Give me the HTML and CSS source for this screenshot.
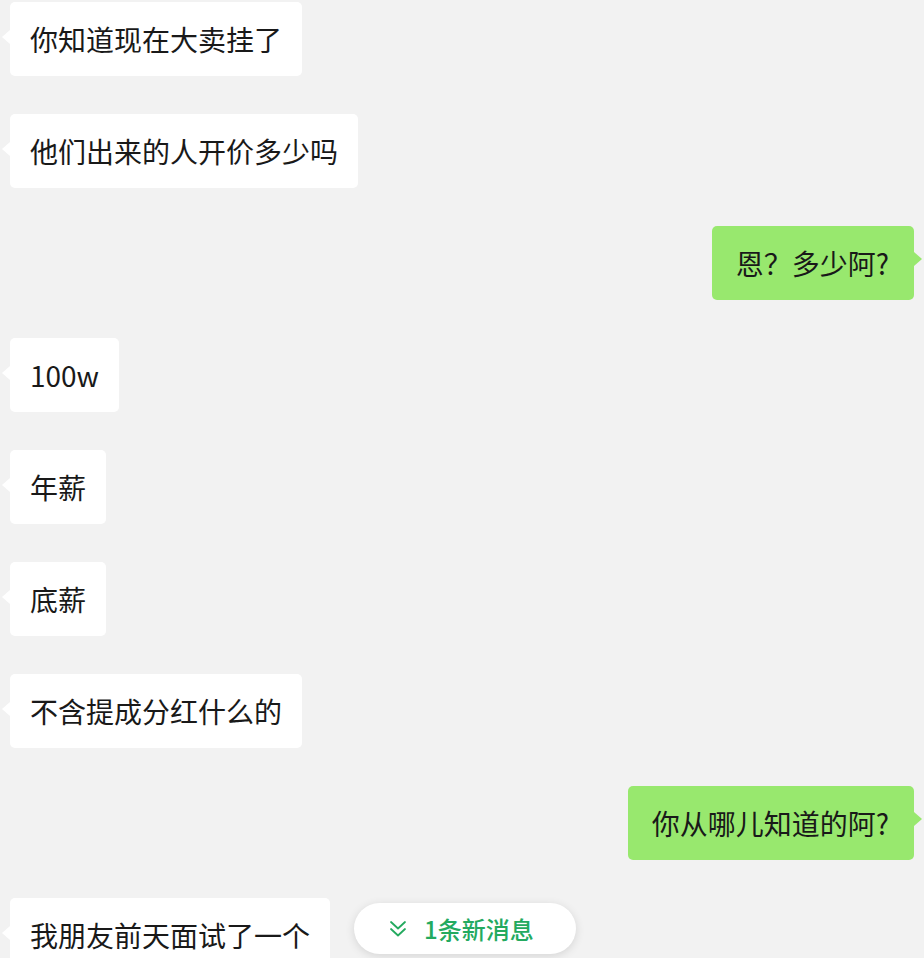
FILE: index.html
```html
<!DOCTYPE html>
<html lang="zh-CN">
<head>
  <meta charset="UTF-8">
  <meta name="viewport" content="width=device-width, initial-scale=1.0">
  <title>聊天</title>
  <link rel="stylesheet" href="styles.css">
</head>
<body>
  <div class="chat">
    <div class="row left"><div class="bubble">你知道现在大卖挂了</div></div>
    <div class="row left"><div class="bubble">他们出来的人开价多少吗</div></div>
    <div class="row right"><div class="bubble">恩？多少阿?</div></div>
    <div class="row left"><div class="bubble">100w</div></div>
    <div class="row left"><div class="bubble">年薪</div></div>
    <div class="row left"><div class="bubble">底薪</div></div>
    <div class="row left"><div class="bubble">不含提成分红什么的</div></div>
    <div class="row right"><div class="bubble">你从哪儿知道的阿?</div></div>
    <div class="row left"><div class="bubble">我朋友前天面试了一个</div></div>
  </div>

  <div class="new-msg">
    <svg class="chevrons" width="20" height="18" viewBox="0 0 20 18" fill="none" stroke="currentColor" stroke-width="1.8" stroke-linecap="round" stroke-linejoin="round">
      <polyline points="3,2 10,8.5 17,2"/>
      <polyline points="3,9 10,15.5 17,9"/>
    </svg>
    <span>1条新消息</span>
  </div>
</body>
</html>
```

FILE: styles.css
```css
html, body {
  height: 100%;
}
body {
  margin: 0;
  background-color: #f2f2f2;
  font-family: "Noto Sans CJK SC", "Noto Sans", sans-serif;
  color: #191919;
  overflow: hidden;
  position: relative;
}
.chat {
  display: flex;
  flex-direction: column;
  gap: 38px;
  padding: 2px 10px 0;
}
.row {
  display: flex;
}
.row.right {
  justify-content: flex-end;
}
.bubble {
  position: relative;
  background-color: #fff;
  border-radius: 5px;
  padding: 20px 20px;
  font-size: 28px;
  line-height: 34px;
  white-space: nowrap;
}
.left .bubble::before {
  content: "";
  position: absolute;
  left: -8px;
  top: 28px;
  border-top: 7px solid transparent;
  border-bottom: 7px solid transparent;
  border-right: 8px solid #fff;
}
.right .bubble {
  background-color: #98e86e;
  padding: 20px 25px 20px 24px;
}
.right .bubble::after {
  content: "";
  position: absolute;
  right: -8px;
  top: 26px;
  border-top: 7px solid transparent;
  border-bottom: 7px solid transparent;
  border-left: 8px solid #98e86e;
}
.new-msg {
  position: absolute;
  left: 354px;
  top: 903px;
  width: 222px;
  height: 51px;
  box-sizing: border-box;
  background: #fff;
  border-radius: 26px;
  box-shadow: 0 2px 10px rgba(0, 0, 0, 0.12);
  display: flex;
  align-items: center;
  padding-left: 34px;
  gap: 16px;
  color: #24aa5f;
  font-size: 24px;
  font-weight: 500;
}
.chevrons {
  display: block;
}
```
